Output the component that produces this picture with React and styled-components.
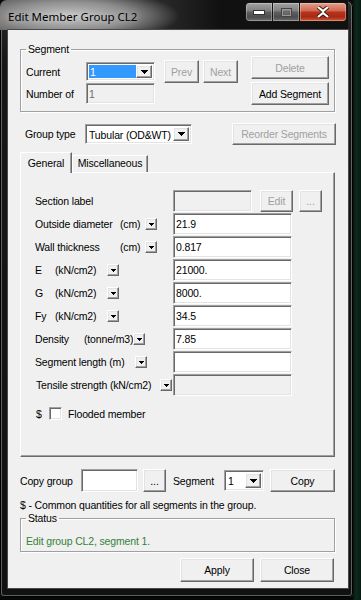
import React from 'react'
import styled, { createGlobalStyle } from 'styled-components'

const GlobalStyle = createGlobalStyle`
  html, body {
    margin: 0;
    padding: 0;
    background: linear-gradient(to right, #050807 0, #050807 352px, #0d2a1f 356px, #071a12 100%);
  }
  body {
    font-family: 'Liberation Sans', Arial, sans-serif;
    font-size: 10.5px;
    letter-spacing: -0.15px;
    color: #000;
  }
  * { box-sizing: border-box; }
`

const Window = styled.div`
  width: 353px;
  height: 597px;
  display: flex;
  flex-direction: column;
  padding: 0 5px 9px 8px;
  border-radius: 7px 7px 4px 4px;
  background: linear-gradient(to bottom, #2c2c2c 0, #161616 60px, #111 100%);
  box-shadow: inset 0 0 0 1px #000, inset 0 0 0 2px rgba(190, 190, 190, 0.45);
`

const TitleBar = styled.div`
  height: 30px;
  display: flex;
  justify-content: space-between;
  margin: 0 0 0 -8px;
  border-radius: 7px 0 0 0;
  background:
    radial-gradient(ellipse 110px 26px at 70px 16px, rgba(205, 205, 205, 0.95) 0%, rgba(155, 155, 155, 0.85) 55%, rgba(60, 60, 60, 0) 100%),
    linear-gradient(to right, #555 0, #3a3a3a 120px, #111 220px);
`

const TitleText = styled.div`
  padding: 9px 0 0 8px;
  font-family: 'Noto Sans', 'Open Sans', sans-serif;
  font-size: 11.5px;
  letter-spacing: 0;
  line-height: 15px;
  color: #000;
  text-shadow: 0 0 6px rgba(255, 255, 255, 0.6);
`

const CaptionButtons = styled.div`
  display: flex;
  align-self: flex-start;
  margin-top: 2px;
  margin-right: 1px;
`

const CaptionButton = styled.div`
  width: ${p => p.$w}px;
  height: 20px;
  display: flex;
  align-items: center;
  justify-content: center;
  border: 1px solid #161616;
  background: ${p => p.$close
    ? 'linear-gradient(#e3a08e 0%, #d06a52 42%, #b8321a 52%, #a82a14 78%, #d35a3a 100%)'
    : 'linear-gradient(#a2a2a2 0%, #808080 42%, #5e5e5e 52%, #4e4e4e 78%, #6c6c6c 100%)'};
  box-shadow: inset 0 0 0 1px rgba(255, 255, 255, 0.3);
  &:first-child { border-radius: 4px 0 0 4px; }
  &:last-child { border-radius: 0 4px 4px 0; }
  & + & { border-left: none; }
`

const Client = styled.div`
  flex: 1;
  display: flex;
  flex-direction: column;
  background: #f0f0f0;
  padding: 13px 13px 6px 12px;
  box-shadow: 0 0 0 1px #4a4a4a;
`

const GroupBox = styled.fieldset`
  margin: 0;
  min-width: 0;
  padding: ${p => p.$pad};
  border: 1px solid #a0a0a0;
  box-shadow: inset 1px 1px 0 #fff, 1px 1px 0 #fff;
`

const Legend = styled.legend`
  padding: 0 2px;
  line-height: 13px;
`

const Row = styled.div`
  display: flex;
  align-items: center;
  height: ${p => p.$h}px;
  margin-top: ${p => p.$mt || 0}px;
`

const SegmentFields = styled.div`
  align-self: flex-start;
  margin-top: 4px;
`

const Label = styled.span`
  flex: none;
  width: ${p => p.$w}px;
  margin-left: ${p => p.$ml || 0}px;
  white-space: nowrap;
`

const sunken = `
  border: 1px solid;
  border-color: #a0a0a0 #fff #fff #a0a0a0;
  box-shadow: inset 1px 1px 0 #696969, inset -1px -1px 0 #e3e3e3;
`

const TextBox = styled.input`
  flex: none;
  width: ${p => p.$w}px;
  height: ${p => p.$h}px;
  margin: 0 0 0 ${p => p.$ml || 0}px;
  padding: 0 2px;
  ${sunken}
  background: ${p => (p.disabled ? '#f0f0f0' : '#fff')};
  color: ${p => (p.disabled ? '#6d6d6d' : '#000')};
  font: inherit;
  letter-spacing: inherit;
  outline: none;
`

const Combo = styled.div`
  flex: none;
  display: flex;
  width: ${p => p.$w}px;
  height: ${p => p.$h}px;
  margin-left: ${p => p.$ml || 0}px;
  padding: 2px;
  ${sunken}
  background: #fff;
`

const ComboValue = styled.span`
  flex: 1;
  padding-left: 1px;
  line-height: ${p => p.$lh}px;
  background: ${p => (p.$selected ? '#3399ff' : 'transparent')};
  color: ${p => (p.$selected ? '#fff' : '#000')};
  white-space: nowrap;
  overflow: hidden;
`

const raised = `
  border: 1px solid;
  border-color: #fff #696969 #696969 #fff;
  box-shadow: inset -1px -1px 0 #a0a0a0, inset 1px 1px 0 #e3e3e3;
  background: #f0f0f0;
`

const DropButton = styled.span`
  flex: none;
  width: 16px;
  display: flex;
  align-items: center;
  justify-content: center;
  ${raised}
`

const Button = styled.button`
  flex: none;
  width: ${p => p.$w}px;
  height: ${p => p.$h || 23}px;
  margin: 0 ${p => p.$mr || 0}px 0 ${p => p.$ml || 0}px;
  padding: 0;
  ${raised}
  font: inherit;
  letter-spacing: inherit;
  color: ${p => (p.disabled ? '#a0a0a0' : '#000')};
  ${p => p.$push && 'margin-left: auto;'}
`

const ButtonStack = styled.div`
  display: flex;
  flex-direction: column;
  gap: 3px;
  margin-left: auto;
`

const TabStrip = styled.div`
  display: flex;
  align-items: flex-end;
  height: 20px;
  margin-top: 7px;
  position: relative;
  z-index: 1;
`

const Tab = styled.div`
  width: ${p => p.$w}px;
  height: ${p => (p.$active ? 21 : 17)}px;
  margin-bottom: ${p => (p.$active ? -1 : 0)}px;
  padding-top: ${p => (p.$active ? 3 : 0)}px;
  text-align: center;
  line-height: 15px;
  background: #f0f0f0;
  border-top: 1px solid #fff;
  border-left: 1px solid #fff;
  border-right: 1px solid #696969;
  box-shadow: inset -1px 0 0 #a0a0a0;
`

const TabPanel = styled.div`
  height: 285px;
  padding: 17px 0 0 14px;
  border: 1px solid;
  border-color: #fff #696969 #696969 #fff;
  box-shadow: inset -1px -1px 0 #a0a0a0;
`

const FieldRow = styled.div`
  display: flex;
  align-items: center;
  height: 22px;
  margin-bottom: 1px;
`

const FieldLabel = styled.div`
  flex: none;
  width: 138px;
  display: flex;
  align-items: center;
  white-space: nowrap;
`

const Part = styled.span`
  flex: none;
  width: ${p => p.$w}px;
  margin-left: ${p => p.$ml || 0}px;
  overflow: hidden;
`

const UnitButton = styled.span`
  flex: none;
  width: 12px;
  height: 12px;
  display: flex;
  align-items: center;
  justify-content: center;
  ${raised}
`

const CheckRow = styled.div`
  display: flex;
  align-items: center;
  height: 13px;
  margin-top: 11px;
  margin-left: 1px;
`

const CheckBox = styled.span`
  flex: none;
  width: 13px;
  height: 13px;
  margin-right: 6px;
  border: 1px solid;
  border-color: #a0a0a0 #fff #fff #a0a0a0;
  box-shadow: inset 1px 1px 0 #696969, inset -1px -1px 0 #e3e3e3;
  background: #fff;
`

const Note = styled.div`
  margin-top: 6px;
  line-height: 14px;
`

const StatusText = styled.div`
  margin-top: 9px;
  line-height: 14px;
  color: #34823a;
`

const Footer = styled.div`
  display: flex;
  justify-content: flex-end;
  gap: 6px;
  margin-top: 6px;
  margin-right: 1px;
`

const Arrow = ({ small }) =>
  small ? (
    <svg width="5" height="3" viewBox="0 0 5 3">
      <path d="M0 0h5v1h-1v1h-1v1h-1v-1h-1v-1h-1z" fill="#000" />
    </svg>
  ) : (
    <svg width="7" height="4" viewBox="0 0 7 4">
      <path d="M0 0h7v1h-1v1h-1v1h-1v1h-1v-1h-1v-1h-1v-1h-1z" fill="#000" />
    </svg>
  )

const fields = [
  { name: 'Outside diameter', nameW: 85, unit: '(cm)', unitW: 25, value: '21.9' },
  { name: 'Wall thickness', nameW: 85, unit: '(cm)', unitW: 25, value: '0.817' },
  { name: 'E', nameW: 20, unit: '(kN/cm2)', unitW: 52, value: '21000.' },
  { name: 'G', nameW: 20, unit: '(kN/cm2)', unitW: 52, value: '8000.' },
  { name: 'Fy', nameW: 20, unit: '(kN/cm2)', unitW: 52, value: '34.5' },
  { name: 'Density', nameW: 49, unit: '(tonne/m3)', unitW: 49, value: '7.85' },
  { name: 'Segment length (m)', nameW: 100, value: '' },
  { name: 'Tensile strength (kN/cm2)', nameW: 124, ml: 1, value: '', disabled: true },
]

export default function App() {
  return (
    <>
      <GlobalStyle />
      <Window>
        <TitleBar>
          <TitleText>Edit Member Group CL2</TitleText>
          <CaptionButtons>
            <CaptionButton $w={28}>
              <svg width="12" height="5" viewBox="0 0 12 5">
                <rect x="0.5" y="0.5" width="11" height="4" fill="#fff" stroke="#333" />
              </svg>
            </CaptionButton>
            <CaptionButton $w={27}>
              <svg width="11" height="9" viewBox="0 0 11 9">
                <rect x="0.5" y="0.5" width="10" height="8" fill="none" stroke="#444" />
                <rect x="1.5" y="1.5" width="8" height="6" fill="none" stroke="#9a9a9a" strokeWidth="1" />
                <rect x="2.5" y="3.5" width="6" height="3" fill="#6a6a6a" />
              </svg>
            </CaptionButton>
            <CaptionButton $w={47} $close>
              <svg width="14" height="12" viewBox="0 0 14 12">
                <path d="M2 1l5 4 5-4M2 11l5-4 5 4" stroke="#3a1a10" strokeWidth="4" fill="none" />
                <path d="M2 1l5 4 5-4M2 11l5-4 5 4" stroke="#fff" strokeWidth="2.2" fill="none" />
              </svg>
            </CaptionButton>
          </CaptionButtons>
        </TitleBar>

        <Client>
          <GroupBox $pad="0 5px 6px 5px">
            <Legend>Segment</Legend>
            <Row $h={49}>
              <SegmentFields>
                <Row $h={23}>
                  <Label $w={60}>Current</Label>
                  <Combo $w={69} $h={19}>
                    <ComboValue $selected $lh={15}>1</ComboValue>
                    <DropButton><Arrow /></DropButton>
                  </Combo>
                  <Button $w={35} $ml={9} disabled>Prev</Button>
                  <Button $w={35} $ml={4} disabled>Next</Button>
                </Row>
                <Row $h={21}>
                  <Label $w={60}>Number of</Label>
                  <TextBox $w={69} $h={21} disabled defaultValue="1" />
                </Row>
              </SegmentFields>
              <ButtonStack>
                <Button $w={78} disabled>Delete</Button>
                <Button $w={78}>Add Segment</Button>
              </ButtonStack>
            </Row>
          </GroupBox>

          <Row $h={23} $mt={10}>
            <Label $w={60} $ml={5}>Group type</Label>
            <Combo $w={107} $h={20}>
              <ComboValue $lh={16}>Tubular (OD&amp;WT)</ComboValue>
              <DropButton><Arrow /></DropButton>
            </Combo>
            <Button $w={104} $h={22} $mr={-1} $push disabled>Reorder Segments</Button>
          </Row>

          <TabStrip>
            <Tab $w={52} $active>General</Tab>
            <Tab $w={76}>Miscellaneous</Tab>
          </TabStrip>
          <TabPanel>
            <FieldRow>
              <FieldLabel>Section label</FieldLabel>
              <TextBox $w={79} $h={22} disabled />
              <Button $w={33} $h={22} $ml={8} disabled>Edit</Button>
              <Button $w={23} $h={22} $ml={6} disabled>...</Button>
            </FieldRow>
            {fields.map(f => (
              <FieldRow key={f.name}>
                <FieldLabel>
                  <Part $w={f.nameW} $ml={f.ml}>{f.name}</Part>
                  {f.unit && <Part $w={f.unitW}>{f.unit}</Part>}
                  <UnitButton><Arrow small /></UnitButton>
                </FieldLabel>
                <TextBox $w={119} $h={22} disabled={f.disabled} defaultValue={f.value} />
              </FieldRow>
            ))}
            <CheckRow>
              <Label $w={13}>$</Label>
              <CheckBox />
              <span>Flooded member</span>
            </CheckRow>
          </TabPanel>

          <Row $h={23} $mt={12}>
            <Label $w={61}>Copy group</Label>
            <TextBox $w={57} $h={23} />
            <Button $w={23} $ml={5}>...</Button>
            <Label $w={51} $ml={7}>Segment</Label>
            <Combo $w={40} $h={21}>
              <ComboValue $lh={17}>1</ComboValue>
              <DropButton><Arrow /></DropButton>
            </Combo>
            <Button $w={65} $ml={6}>Copy</Button>
          </Row>

          <Note>$ - Common quantities for all segments in the group.</Note>

          <GroupBox $pad="0 5px 3px 5px">
            <Legend>Status</Legend>
            <StatusText>Edit group CL2, segment 1.</StatusText>
          </GroupBox>

          <Footer>
            <Button $w={74} $h={24}>Apply</Button>
            <Button $w={74} $h={24}>Close</Button>
          </Footer>
        </Client>
      </Window>
    </>
  )
}
